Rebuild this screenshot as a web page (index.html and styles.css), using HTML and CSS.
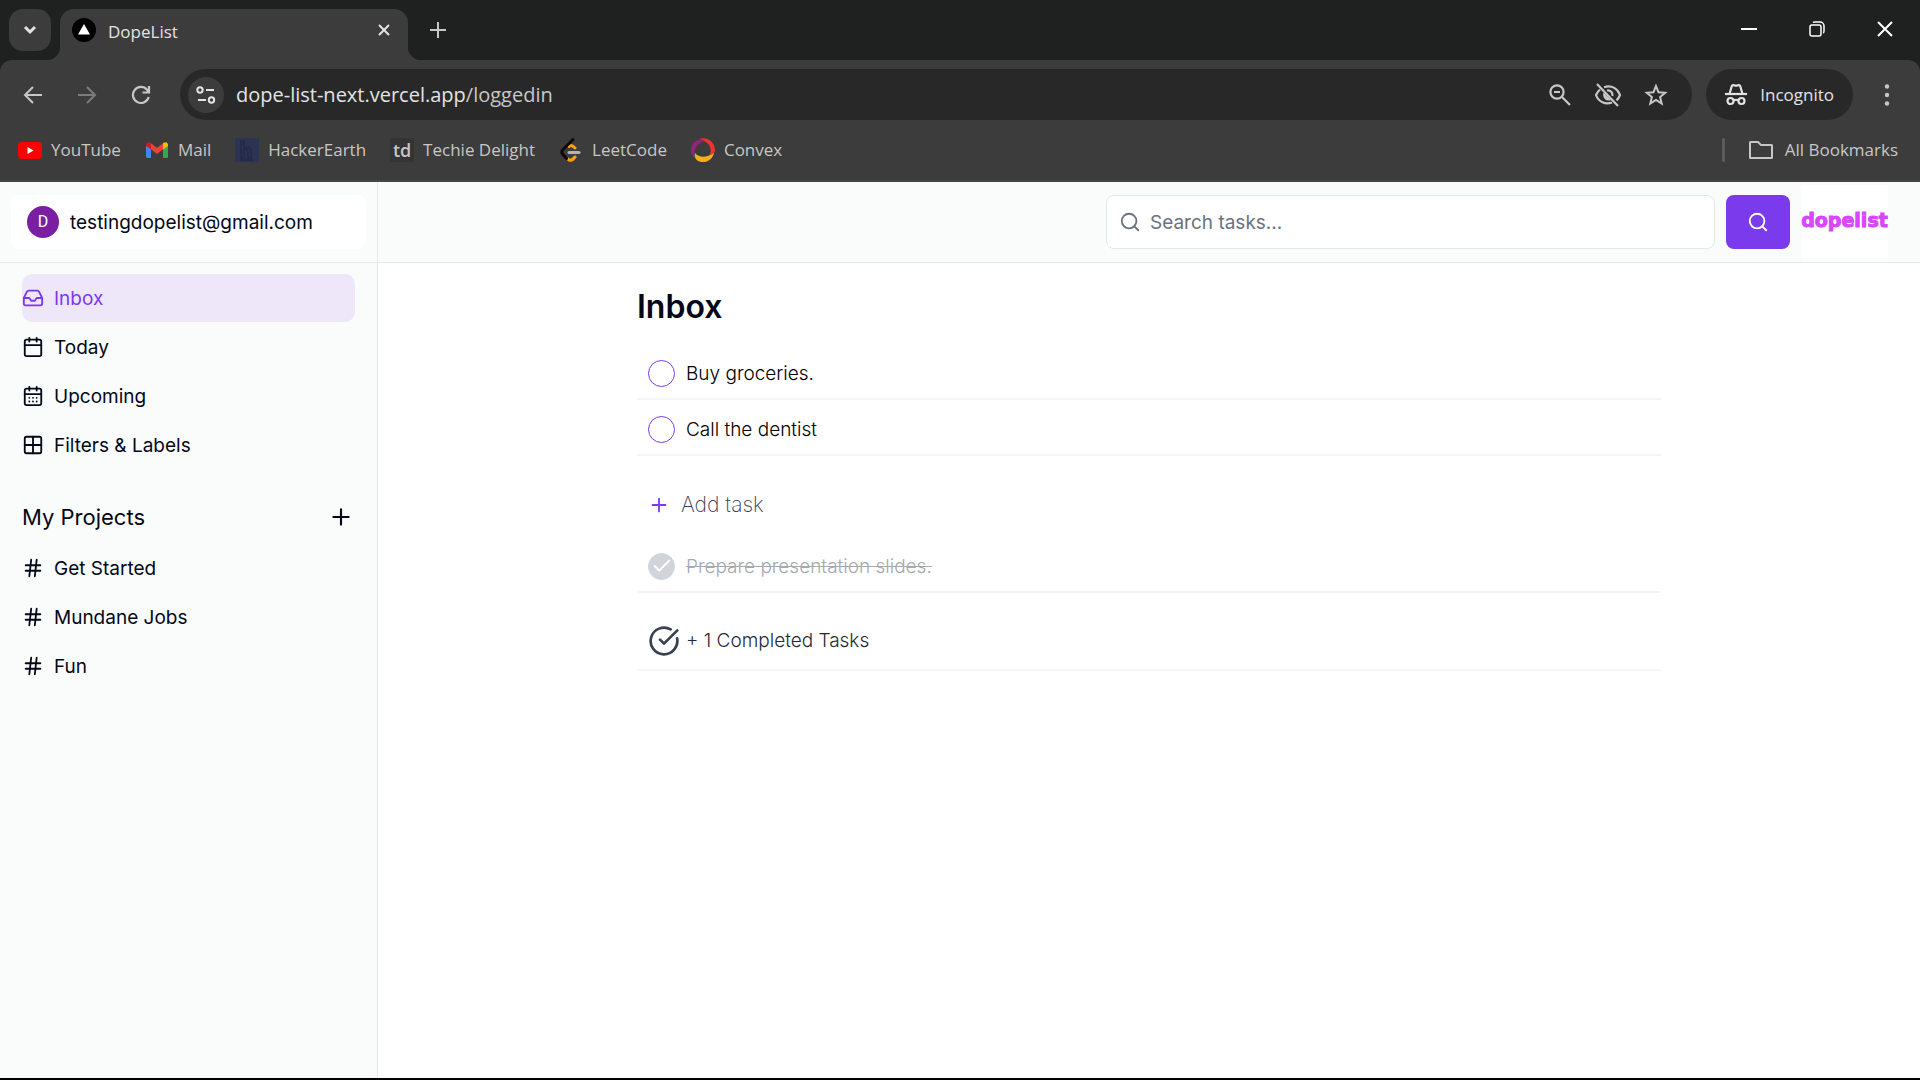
FILE: index.html
```html
<!DOCTYPE html>
<html lang="en">
<head>
<meta charset="utf-8">
<title>DopeList</title>
<link rel="stylesheet" href="styles.css">
</head>
<body>
<div class="browser">
  <div class="tabstrip">
    <button class="tab-search" aria-label="Search tabs"><svg width="14" height="14" viewBox="0 0 14 14" fill="none" stroke="#e3e3e3" stroke-width="3"><path d="M2 4l5 5 5-5"/></svg></button>
    <div class="tab">
      <svg width="24" height="24" viewBox="0 0 24 24"><circle cx="12" cy="12" r="12"/><path d="M12 6l6 10.500H6z" fill="#fff"/></svg>
      <span class="tab-title">DopeList</span>
      <button class="icon-button" aria-label="Close tab"><svg width="12" height="12" viewBox="0 0 12 12" fill="none" stroke="#e3e3e3" stroke-width="2"><path d="M1 1l10 10M11 1L1 11"/></svg></button>
    </div>
    <button class="icon-button new-tab" aria-label="New tab"><svg width="16" height="16" viewBox="0 0 16 16" fill="none" stroke="#c7c7c7" stroke-width="2"><path d="M8 0v16M0 8h16"/></svg></button>
    <div class="window-controls">
      <button class="icon-button" aria-label="Minimize"><svg width="16" height="16" viewBox="0 0 16 16" fill="none" stroke="#fff" stroke-width="2"><path d="M0 8h16"/></svg></button>
      <button class="icon-button" aria-label="Restore"><svg width="16" height="16" viewBox="0 0 16 16" fill="none" stroke="#fff" stroke-width="1.500"><rect x="1" y="4" width="11" height="11" rx="2"/><path d="M4 1.500C4.500 1 5 1 6 1h5a4 4 0 0 1 4 4v5c0 1 0 1.500-.8 2"/></svg></button>
      <button class="icon-button" aria-label="Close"><svg width="16" height="16" viewBox="0 0 16 16" fill="none" stroke="#fff" stroke-width="2"><path d="M1 1l14 14M15 1L1 15"/></svg></button>
    </div>
  </div>
  <div class="toolbar">
    <div class="nav-buttons">
      <button class="icon-button" aria-label="Back"><svg width="20" height="20" viewBox="0 0 20 20" fill="none" stroke="#c7c7c7" stroke-width="2"><path d="M19 10H2.500M10 2l-8 8 8 8"/></svg></button>
      <button class="icon-button" aria-label="Forward" disabled><svg width="20" height="20" viewBox="0 0 20 20" fill="none" stroke="#7c7c7c" stroke-width="2"><path d="M1 10h16.500M10 2l8 8-8 8"/></svg></button>
      <button class="icon-button" aria-label="Reload"><svg width="20" height="20" viewBox="0 0 20 20" fill="none" stroke="#c7c7c7" stroke-width="2.200"><path d="M17.700 12A8 8 0 1 1 16 4.700L18 7M18 1v6.500h-6.500"/></svg></button>
    </div>
    <div class="omnibox">
      <button class="site-info" aria-label="View site information"><svg width="20" height="18" viewBox="0 0 20 18" fill="none" stroke="#e3e3e3" stroke-width="2"><circle cx="4" cy="4" r="2.700"/><path d="M10 4h8M2 14h8"/><circle cx="15.500" cy="14" r="2.700"/></svg></button>
      <div class="url">dope-list-next.vercel.app<span class="url-path">/loggedin</span></div>
      <div class="omnibox-actions">
        <button class="icon-button" aria-label="Zoom"><svg width="24" height="24" viewBox="0 0 24 24" fill="none" stroke="#c7c7c7" stroke-width="2.200"><circle cx="9" cy="9" r="6.600"/><path d="M14 14l8 8M6 9h6"/></svg></button>
        <button class="icon-button" aria-label="Third-party cookies blocked"><svg width="28" height="28" viewBox="0 0 28 28" fill="none" stroke="#c7c7c7" stroke-width="2.200"><path d="M3 3l21 22"/><path d="M10 6.200C18 3.500 24 8 26 14c-.8 2.200-2 4-3.500 5.300M6 8.500C4.200 10 3 11.700 2 14c2.500 7 9.500 10 16 7.500"/><path d="M13 9.500c3.500-.5 6 2 5.500 5.500"/><path d="M9.500 11.500l7.500 7.500c-2 1-4.500.7-6.200-1-1.600-1.700-2.200-4.500-1.300-6.500z" fill="#c7c7c7" stroke="none"/></svg></button>
        <button class="icon-button" aria-label="Bookmark this tab"><svg width="24" height="24" viewBox="0 0 24 24" fill="none" stroke="#c7c7c7" stroke-width="2"><path d="M12 3l2.500 6.200 6.700.5-5.100 4.300 1.600 6.600L12 17l-5.700 3.600L7.900 14 2.800 9.700l6.700-.5z"/></svg></button>
      </div>
    </div>
    <button class="incognito"><svg width="24" height="24" viewBox="0 0 24 24" fill="none" stroke="#e3e3e3" stroke-width="2.200"><path d="M1 11h22"/><path d="M5.500 11l2.300-8c.5-1.500 2-1 4.200-.2 2.200-.8 3.700-1.300 4.200.2l2.300 8"/><circle cx="6.500" cy="18" r="3"/><circle cx="17.500" cy="18" r="3"/><path d="M9.500 17.500q2.500-1.500 5 0"/></svg>Incognito</button>
    <button class="icon-button menu" aria-label="Menu"><svg width="6" height="22" viewBox="0 0 6 22" fill="#c7c7c7"><circle cx="3" cy="2.500" r="2.200"/><circle cx="3" cy="11" r="2.200"/><circle cx="3" cy="19.500" r="2.200"/></svg></button>
  </div>
  <div class="bookmarks">
    <a href="#"><svg width="24" height="24" viewBox="0 0 24 24"><rect y="4" width="24" height="17" rx="4" fill="#f00"/><path d="M9.500 9v7l6-3.500z" fill="#fff"/></svg>YouTube</a>
    <a href="#"><svg width="24" height="24" viewBox="0 0 24 24"><path d="M1 7l5 3.500V20H2.500Q1 20 1 18.500z" fill="#4285f4"/><path d="M23 7l-5 3.500V20h3.500q1.500 0 1.500-1.500z" fill="#34a853"/><path d="M6 5.200l6 4.800 6-4.800v6L12 16l-6-4.800z" fill="#ea4335"/><path d="M18 5.200c2.500-2 5-.7 5 1.800v1l-5 3.500z" fill="#fbbc04"/><path d="M6 5.200C3.500 3.200 1 4.500 1 7v1l5 3.500z" fill="#c5221f"/></svg>Mail</a>
    <a href="#"><svg width="24" height="24" viewBox="0 0 24 24"><rect width="24" height="24" fill="#2c3454"/><path d="M6 3h3v17H6zM9 11c5-4 7 0 7 2v7h-3v-7c0-3-4-2-4 0M5 22h14" fill="none" stroke="#232946" stroke-width="1.500"/></svg>HackerEarth</a>
    <a href="#"><span class="td-icon">td</span>Techie Delight</a>
    <a href="#"><svg width="24" height="24" viewBox="0 0 24 24" fill="none" stroke-width="3" stroke-linecap="round"><path d="M10 8.500c2-2 3.500-1 6 1.500M9 21c1.500 2 4 2 7-2" stroke="#ffa116"/><path d="M14 1.500L4 11.500q-2.500 2.500 0 5l3.500 4" stroke="#0a0a0a"/><path d="M10 14.500h10" stroke="#b3b3b3"/></svg>LeetCode</a>
    <a href="#"><svg width="24" height="24" viewBox="0 0 24 24"><path d="M8 1C16-2 24 4 24 12c0 3-2 5-6 6 4-7 1-14-10-17z" fill="#ee342f"/><path d="M4 15c4 5 12 5 19 0-2 8-10 11-16 8-3-2-4-5-3-8z" fill="#f3b01c"/><path d="M14 3C8-1 0 4 0 12c0 3 1 6 3 8 0-3 0-5 1-8 1-4 4-7 10-9z" fill="#8d2676"/></svg>Convex</a>
    <div class="all-bookmarks"><span class="divider"></span><a href="#"><svg width="24" height="24" viewBox="0 0 24 24" fill="none" stroke="#c7c7c7" stroke-width="2"><path d="M1 6V4.500Q1 4 1.500 4H9l3 3h10.500q.5 0 .5.500v12q0 .5-.5.500h-21q-.5 0-.5-.5z"/></svg>All Bookmarks</a></div>
  </div>
</div>

<svg class="symbols" aria-hidden="true">
  <symbol id="hash" viewBox="0 0 24 24"><path d="M4 9h16M4 15h16M10 3L8 21M16 3l-2 18"/></symbol>
  <symbol id="search" viewBox="0 0 24 24"><circle cx="11" cy="11" r="8"/><path d="M21 21l-4.300-4.300"/></symbol>
  <symbol id="plus" viewBox="0 0 24 24"><path d="M5 12h14M12 5v14"/></symbol>
</svg>

<div class="app">
  <aside class="sidebar">
    <div class="account">
      <button class="account-button"><span class="avatar">D</span>testingdopelist@gmail.com</button>
    </div>
    <nav class="nav">
      <a class="nav-item active" href="#"><svg class="icon" viewBox="0 0 24 24"><path d="M22 12h-6l-2 3h-4l-2-3H2"/><path d="M5.450 5.110L2 12v6a2 2 0 0 0 2 2h16a2 2 0 0 0 2-2v-6l-3.450-6.890A2 2 0 0 0 16.760 4H7.240a2 2 0 0 0-1.790 1.110z"/></svg>Inbox</a>
      <a class="nav-item" href="#"><svg class="icon" viewBox="0 0 24 24"><path d="M8 2v4M16 2v4M3 10h18"/><rect x="3" y="4" width="18" height="18" rx="2"/></svg>Today</a>
      <a class="nav-item" href="#"><svg class="icon" viewBox="0 0 24 24"><path d="M8 2v4M16 2v4M3 10h18M8 14h.01M12 14h.01M16 14h.01M8 18h.01M12 18h.01M16 18h.01"/><rect x="3" y="4" width="18" height="18" rx="2"/></svg>Upcoming</a>
      <a class="nav-item" href="#"><svg class="icon" viewBox="0 0 24 24"><path d="M3 12h18M12 3v18"/><rect x="3" y="3" width="18" height="18" rx="2"/></svg>Filters &amp; Labels</a>
    </nav>
    <div class="projects-head">
      <h2>My Projects</h2>
      <button class="icon-button" aria-label="Add project"><svg class="icon add-icon"><use href="#plus"/></svg></button>
    </div>
    <nav class="nav projects">
      <a class="nav-item" href="#"><svg class="icon"><use href="#hash"/></svg>Get Started</a>
      <a class="nav-item" href="#"><svg class="icon"><use href="#hash"/></svg>Mundane Jobs</a>
      <a class="nav-item" href="#"><svg class="icon"><use href="#hash"/></svg>Fun</a>
    </nav>
  </aside>
  <div class="page">
    <header class="topbar">
      <form class="search">
        <label class="search-field"><svg class="icon"><use href="#search"/></svg><input type="search" placeholder="Search tasks..." aria-label="Search tasks"></label>
        <button class="search-button" type="button" aria-label="Search"><svg class="icon"><use href="#search"/></svg></button>
      </form>
      <a class="logo" href="#">dopelist</a>
    </header>
    <main class="content">
      <h1>Inbox</h1>
      <label class="task"><input class="check" type="checkbox">Buy groceries.</label>
      <label class="task"><input class="check" type="checkbox">Call the dentist</label>
      <button class="add-task"><svg class="icon"><use href="#plus"/></svg>Add task</button>
      <label class="task done"><span class="check-wrap"><input class="check" type="checkbox" checked><svg class="tick" viewBox="0 0 24 24"><path d="M20 6L9 17l-5-5"/></svg></span><s>Prepare presentation slides.</s></label>
      <div class="completed"><svg viewBox="0 0 24 24"><path d="M21.800 10A10 10 0 1 1 17 3.335"/><path d="M9 11l3 3L22 4"/></svg>+ 1 Completed Tasks</div>
    </main>
  </div>
</div>
</body>
</html>
```
FILE: styles.css
```css
* { box-sizing: border-box; }
body {
  margin: 0;
  min-height: 100vh;
  display: flex;
  flex-direction: column;
  font: 19px/29px Inter, sans-serif;
  color: #020817;
  background: #fff;
  border-bottom: 2px solid #000;
}
button { font: inherit; color: inherit; border: 0; padding: 0; background: none; }
a { color: inherit; text-decoration: none; }
h1, h2 { margin: 0; }
svg { display: block; flex: none; }
.symbols { width: 0; height: 0; position: absolute; }
.icon-button { display: flex; align-items: center; justify-content: center; }

/* Browser window */
.browser {
  font: 17px/24px "Open Sans", sans-serif;
  color: #c7c7c7;
  background: #1f2120;
}
.tabstrip { display: flex; height: 60px; padding: 9px 27px 0 9px; }
.tab-search {
  width: 42px;
  height: 42px;
  border-radius: 14px;
  background: #3c3c3c;
  display: grid;
  place-items: center;
}
.tab {
  position: relative;
  width: 348px;
  margin-left: 9px;
  padding: 0 18px 9px 12px;
  border-radius: 14px 14px 0 0;
  background: #3c3c3c;
  color: #e3e3e3;
  display: flex;
  align-items: center;
}
.tab::before, .tab::after {
  content: "";
  position: absolute;
  bottom: 0;
  width: 14px;
  height: 14px;
}
.tab::before { right: 100%; background: radial-gradient(circle at 0 0, transparent 14px, #3c3c3c 15px); }
.tab::after { left: 100%; background: radial-gradient(circle at 100% 0, transparent 14px, #3c3c3c 15px); }
.tab-title { flex: 1; padding: 3px 0 0 12px; }
.new-tab { width: 16px; height: 42px; margin-left: 22px; }
.window-controls { display: flex; gap: 52px; height: 40px; margin-left: auto; }

.toolbar {
  display: flex;
  align-items: center;
  padding: 9px 30px 0 23px;
  background: #3c3c3c;
  border-radius: 12px 12px 0 0;
}
.nav-buttons { display: flex; gap: 34px; }
.omnibox {
  flex: 1;
  display: flex;
  align-items: center;
  height: 51px;
  margin: 0 14px 0 29px;
  padding: 0 24px 0 8px;
  border-radius: 26px;
  background: #282828;
}
.site-info {
  width: 36px;
  height: 36px;
  border-radius: 50%;
  background: #3c3c3c;
  display: grid;
  place-items: center;
}
.url { flex: 1; padding-left: 12px; font-size: 20px; color: #e3e3e3; }
.url-path { color: #c7c7c7; }
.omnibox-actions { display: flex; align-items: center; gap: 22px; }
.incognito {
  display: flex;
  align-items: center;
  gap: 12px;
  height: 51px;
  padding: 0 19px 0 18px;
  border-radius: 26px;
  background: #282828;
  color: #e3e3e3;
}
.menu { margin-left: 31px; }

.bookmarks {
  display: flex;
  gap: 24px;
  height: 62px;
  padding: 0 22px 0 18px;
  align-items: center;
  background: #3c3c3c;
  border-bottom: 2px solid #474747;
}
.bookmarks a { display: flex; align-items: center; gap: 9px; }
.td-icon {
  width: 24px;
  background: #343434;
  font-size: 18px;
  font-weight: 600;
  text-align: center;
}
.all-bookmarks { display: flex; gap: 24px; margin-left: auto; align-items: center; }
.all-bookmarks a { gap: 12px; }
.divider { width: 3px; height: 24px; border-radius: 2px; background: #5c5c5c; }

/* App */
.app { flex: 1; display: grid; grid-template-columns: 378px 1fr; }
.icon {
  width: 22px;
  height: 22px;
  fill: none;
  stroke: currentColor;
  stroke-width: 2;
  stroke-linecap: round;
  stroke-linejoin: round;
}
.sidebar { background: #fafcfb; border-right: 1px solid #e5e7eb; }
.account { height: 81px; padding: 13px 11px; border-bottom: 1px solid #e5e7eb; }
.account-button {
  width: 100%;
  height: 54px;
  padding: 0 16px;
  border-radius: 8px;
  background: #fff;
  display: flex;
  align-items: center;
  gap: 11px;
}
.avatar {
  width: 32px;
  height: 32px;
  border-radius: 50%;
  background: #7b1fa2;
  color: #fff;
  font: 16px/32px Roboto, sans-serif;
  text-align: center;
}
.nav { display: grid; gap: 1px; padding: 11px 22px 0; }
.nav-item {
  display: flex;
  align-items: center;
  gap: 10px;
  height: 48px;
  border-radius: 10px;
}
.nav-item.active { background: #eee6f9; color: #7c3aed; }
.projects-head {
  display: flex;
  align-items: center;
  justify-content: space-between;
  padding: 34px 23px 0 22px;
}
.projects-head h2 { font-size: 22px; font-weight: 400; line-height: 28px; }
.add-icon { width: 26px; height: 26px; }
.projects { padding-top: 13px; }

.topbar {
  display: flex;
  justify-content: flex-end;
  align-items: center;
  gap: 11px;
  height: 81px;
  padding-right: 32px;
  background: #fafcfb;
  border-bottom: 1px solid #e5e7eb;
}
.search { display: flex; gap: 11px; }
.search-field {
  display: flex;
  align-items: center;
  gap: 9px;
  width: 609px;
  height: 54px;
  padding: 0 12px;
  border: 1px solid #e5e7eb;
  border-radius: 8px;
  background: #fff;
  color: #6b7280;
}
.search-field input {
  flex: 1;
  border: 0;
  padding: 0;
  background: none;
  font: inherit;
  outline: 0;
}
.search-field input::placeholder { color: #6b7280; }
.search-button {
  width: 64px;
  border-radius: 8px;
  background: #7c3aed;
  color: #fff;
  display: grid;
  place-items: center;
}
.logo {
  width: 87px;
  height: 74px;
  background: #fff;
  color: #d946ff;
  font: bold 19px/70px "DejaVu Sans", sans-serif;
  -webkit-text-stroke: 1px #d946ff;
  text-align: center;
}

.content { max-width: 1024px; margin: 0 auto; padding-top: 24px; }
h1 { font-size: 32px; line-height: 40px; font-weight: 600; }
.task {
  display: flex;
  align-items: center;
  gap: 11px;
  height: 56px;
  padding: 4px 11px 0;
  border-bottom: 2px solid #f3f4f6;
}
h1 + .task { margin-top: 17px; }
.task, .completed { font-weight: 300; }
.task { color: #000; }
.check {
  appearance: none;
  width: 27px;
  height: 27px;
  margin: 0;
  border: 1px solid #7c3aed;
  border-radius: 50%;
}
.check-wrap { display: grid; place-items: center; }
.check-wrap > * { grid-area: 1 / 1; }
.check:checked { background: #d1d5db; border-color: #d1d5db; }
.tick {
  width: 22px;
  height: 22px;
  fill: none;
  stroke: #fff;
  stroke-width: 2;
  stroke-linecap: round;
  z-index: 1;
}
.add-task {
  display: flex;
  align-items: center;
  gap: 11px;
  margin: 34px 0 0 11px;
  font-size: 21px;
  font-weight: 200;
  line-height: 30px;
  color: #374151;
}
.add-task .icon { color: #7c3aed; }
.task.done { margin-top: 17px; color: #a6a9ae; }
.completed {
  display: flex;
  align-items: center;
  gap: 6px;
  height: 78px;
  padding: 19px 11px 0;
  border-bottom: 2px solid #f3f4f6;
  color: #1f2937;
}
.completed svg {
  width: 32px;
  height: 32px;
  fill: none;
  stroke: #374151;
  stroke-width: 2;
  stroke-linecap: round;
  stroke-linejoin: round;
}
```
